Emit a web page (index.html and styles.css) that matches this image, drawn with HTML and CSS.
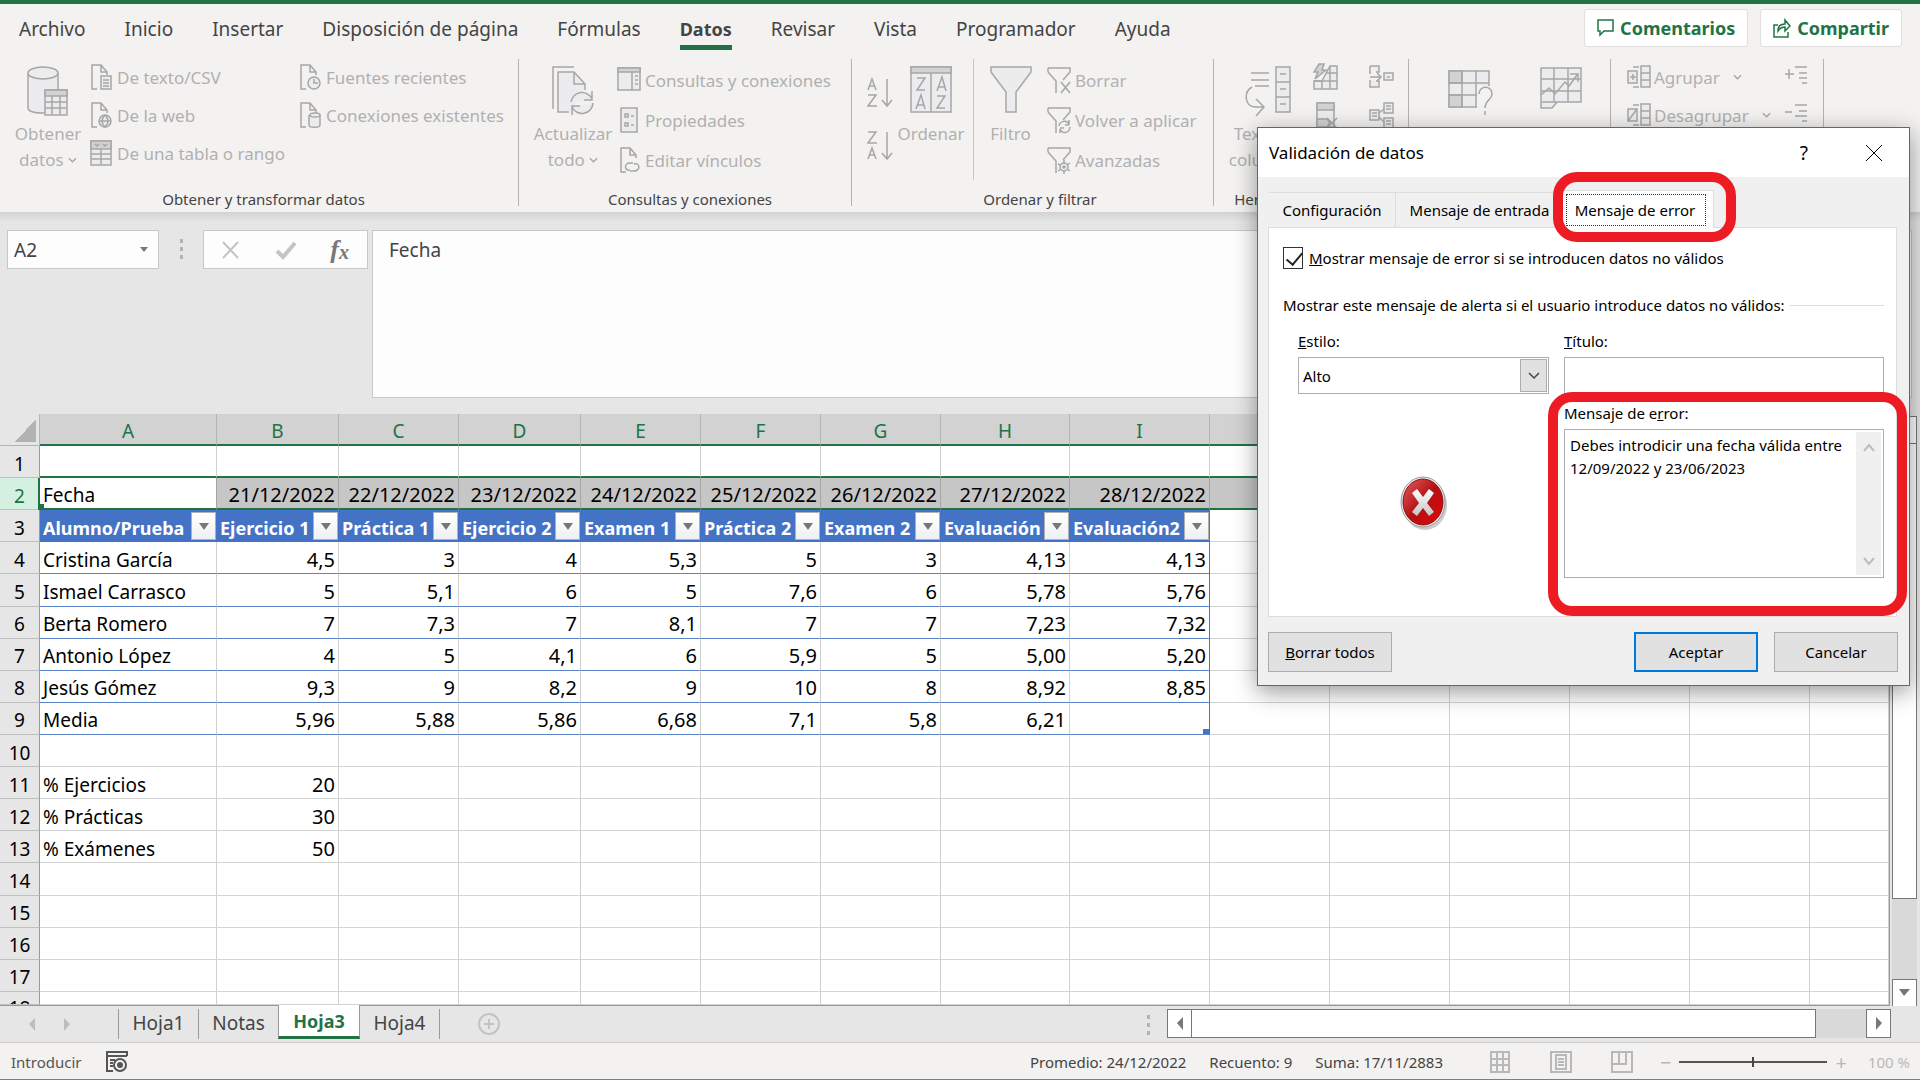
FILE: index.html
```html
<!doctype html>

<html lang="es">
    <head>
        <meta charset="utf-8">
        <meta name="viewport" content="width=device-width, initial-scale=1">

        <title>Validación de datos</title>
        <link rel="stylesheet" href="styles.css">
    </head>

    <body>
        <!-- shared icon shapes -->
        <svg class="defs" aria-hidden="true">
            <symbol id="page" viewBox="0 0 24 28">
                <path d="M7 26H2V2h9l6 7v3M11 2v7h6" />
            </symbol>
            <symbol id="chevron" viewBox="0 0 10 8">
                <path d="M1 2l4 4 4-4" />
            </symbol>
            <symbol id="funnel" viewBox="0 0 24 28">
                <path d="M1 2h22v4l-7 8M1 6V2M1 6l8 9v12" />
            </symbol>
        </svg>

        <nav class="menuBar">
            <a href="#">Archivo</a>
            <a href="#">Inicio</a>
            <a href="#">Insertar</a>
            <a href="#">Disposición de página</a>
            <a href="#">Fórmulas</a>
            <a href="#" class="current">Datos</a>
            <a href="#">Revisar</a>
            <a href="#">Vista</a>
            <a href="#">Programador</a>
            <a href="#">Ayuda</a>
            <div class="menuActions">
                <button class="action">
                    <svg width="17" height="20" viewBox="0 0 17 20"><path d="M1 2h15v11H7l-4 4v-4H1z" /></svg>
                    Comentarios
                </button>
                <button class="action">
                    <svg width="18" height="20" viewBox="0 0 18 20"><path d="M5 7H1v12h14v-5M5 13c0-5 3-7 7-7V2l5 6-5 5V9c-3 0-5 1-7 4z" /></svg>
                    Compartir
                </button>
            </div>
        </nav>

        <div class="ribbon">
            <section class="group groupGet">
                <div class="tools">
                    <button class="big bigGet">
                        <svg width="42" height="50" viewBox="0 0 42 50">
                            <path class="soft" d="M1 7v35c0 3 6 5 15 5h6V24h9V7" />
                            <ellipse class="soft" cx="16" cy="7" rx="15" ry="6" />
                            <path class="soft" d="M18 24h22v25H18z" />
                            <path class="shade" d="M18 24h22v6H18z" />
                            <path d="M18 36h22M18 42h22M25 30v19M33 30v19" />
                        </svg>
                        <span>Obtener</span>
                        <span>datos <svg width="9" height="8"><use href="#chevron" /></svg></span>
                    </button>
                    <div class="col colSources">
                        <button class="small"><svg width="24" height="28"><use href="#page" /><path class="soft" d="M11 13h10v13H11zM13 17h6M13 20h6M13 23h6" /></svg>De texto/CSV</button>
                        <button class="small"><svg width="24" height="28"><use href="#page" /><circle class="soft" cx="15" cy="20" r="6" /><path d="M9 20h12M15 14c-4 4-4 8 0 12 4-4 4-8 0-12" /></svg>De la web</button>
                        <button class="small"><svg width="24" height="28"><path class="soft" d="M1 2h20v24H1z" /><path class="shade" d="M1 2h20v8H1z" /><path d="M11 10v16M1 15h20M1 20h20M5 5l2 2 2-2M13 5l2 2 2-2" /></svg>De una tabla o rango</button>
                    </div>
                    <div class="col">
                        <button class="small"><svg width="24" height="28"><use href="#page" /><circle class="soft" cx="15" cy="20" r="6" /><path d="M15 16v4h4" /></svg>Fuentes recientes</button>
                        <button class="small"><svg width="24" height="28"><use href="#page" /><path class="soft" d="M10 14v10c0 3 11 3 11 0V14" /><ellipse class="soft" cx="16" cy="14" rx="5" ry="2" /></svg>Conexiones existentes</button>
                    </div>
                </div>
                <h2>Obtener y transformar datos</h2>
            </section>

            <section class="group groupQueries">
                <div class="tools">
                    <button class="big bigRefresh">
                        <svg width="42" height="50" viewBox="0 0 42 50">
                            <path d="M1 43V1h21" />
                            <path class="soft" d="M17 46H6V6h16l11 12v6" />
                            <path d="M22 6v12h11" />
                            <path class="soft" d="M19 36a11 11 0 0 1 21-3M40 25v9h-8M41 37a11 11 0 0 1-21 4M20 49v-9h8" />
                        </svg>
                        <span>Actualizar</span>
                        <span>todo <svg width="9" height="8"><use href="#chevron" /></svg></span>
                    </button>
                    <div class="col colWide">
                        <button class="small"><svg width="24" height="28"><path class="soft" d="M1 2h22v22H1z" /><path class="shade" d="M1 2h22v4H1z" /><path d="M15 6v18M18 10h3M18 14h3M18 18h3" /></svg>Consultas y conexiones</button>
                        <button class="small"><svg width="24" height="28"><path class="soft" d="M4 2h16v24H4z" /><path d="M8 8h3v3H8zM8 17h3v3H8zM14 10h3M14 19h3" /></svg>Propiedades</button>
                        <button class="small"><svg width="24" height="28"><use href="#page" x="2" /><path d="M13 24c-6 1-6-7 0-7h3M17 18c6-2 7 7 0 7h-4" /></svg>Editar vínculos</button>
                    </div>
                </div>
                <h2>Consultas y conexiones</h2>
            </section>

            <section class="group groupSort">
                <div class="tools">
                    <div class="sortButtons">
                        <button aria-label="Ordenar de A a Z">
                            <svg width="26" height="32" viewBox="0 0 26 32"><path d="M1 13l4-11 4 11M2 9h6M1 18h8L1 29h9M20 2v26M15 23l5 6 5-6" /></svg>
                        </button>
                        <button aria-label="Ordenar de Z a A">
                            <svg width="26" height="32" viewBox="0 0 26 32"><path d="M1 2h8L1 13h9M1 29l4-11 4 11M2 25h6M20 2v26M15 23l5 6 5-6" /></svg>
                        </button>
                    </div>
                    <button class="big bigSort">
                        <svg width="42" height="50" viewBox="0 0 42 50">
                            <path class="soft" d="M1 1h40v45H1z" />
                            <path class="shade" d="M1 1h40v6H1z" />
                            <path d="M21 7v39M7 12h8l-8 12h8M6 43l5-14 4 14M7 39h7M27 25l5-14 4 14M28 21h7M27 30h8l-8 12h8" />
                        </svg>
                        <span>Ordenar</span>
                    </button>
                    <button class="big bigFilter">
                        <svg width="42" height="50" viewBox="0 0 42 50"><path class="soft" d="M1 1h40v5L26 26v20H16V26L1 6z" /></svg>
                        <span>Filtro</span>
                    </button>
                    <div class="col colWide">
                        <button class="small"><svg width="24" height="28"><use href="#funnel" /><path d="M14 16l9 11M23 16l-9 11" /></svg>Borrar</button>
                        <button class="small"><svg width="24" height="28"><use href="#funnel" /><path d="M12 20c1-6 9-6 10-1v-5M22 19h-4M23 21c-1 7-8 7-10 2v4M13 22h4" /></svg>Volver a aplicar</button>
                        <button class="small"><svg width="24" height="28"><use href="#funnel" /><circle class="soft" cx="17" cy="21" r="4" /><circle cx="17" cy="21" r="1" /><path d="M17 14v3M17 25v3M11 18l3 1M20 23l3 2M11 25l3-2M20 19l3-2" /></svg>Avanzadas</button>
                    </div>
                </div>
                <h2>Ordenar y filtrar</h2>
            </section>

            <section class="group groupTools">
                <div class="tools">
                    <button class="big bigColumns">
                        <svg width="46" height="50" viewBox="0 0 46 50">
                            <path d="M6 7h18M6 14h18M10 20h14M7 21c-9 5-7 20 3 20h8M11 33l8 8-8 9" />
                            <path class="soft" d="M31 1h14v45H31z" />
                            <path d="M31 16h14M31 31h14M35 8h6M35 23h6M35 38h6" />
                        </svg>
                        <span>Texto en</span>
                        <span>columnas</span>
                    </button>
                    <div class="col colIcons">
                        <button class="small" aria-label="Relleno rápido"><svg width="26" height="28"><path class="soft" d="M1 18v8h23V3h-7L9 18z" /><path d="M17 3v23M9 18v8M1 18h23M14 10h10" /><path class="shade" d="M6 1h5L9 7h4L2 16l3-7H1z" /></svg></button>
                        <button class="small" aria-label="Quitar duplicados"><svg width="26" height="28"><path class="soft" d="M4 2h17v24H4z" /><path class="shade" d="M4 2h17v7H4zM4 18h10l3 4-3 4H4z" /><path d="M14 17l10 10M24 17L14 27" /></svg></button>
                    </div>
                    <div class="col">
                        <button class="small" aria-label="Consolidar"><svg width="26" height="28"><path class="soft" d="M1 3h9v6H7M1 3v8M1 17v7h9v-6H7M15 10h9v7h-9z" /><path d="M1 14h10M8 10l4 4-4 4M18 14h3" /></svg></button>
                        <button class="small" aria-label="Relaciones"><svg width="26" height="28"><path class="soft" d="M1 9h9v10H1zM15 2h9v10h-9zM15 17h9v10h-9z" /><path d="M10 12l5-4M10 16l5 5M3 12h5M3 15h5M17 5h5M17 8h5M17 20h5M17 23h5" /></svg></button>
                    </div>
                </div>
                <h2>Herramientas de datos</h2>
            </section>

            <section class="group groupForecast">
                <div class="tools">
                    <button class="big bigAnalysis">
                        <svg width="46" height="50" viewBox="0 0 46 50">
                            <path class="soft" d="M1 5h40v36H1z" />
                            <path class="shade" d="M1 5h13v12H1zM1 29h13v12H1z" />
                            <path d="M14 5v36M28 5v36M1 17h40M1 29h40" />
                            <path class="bg" d="M29 20h17v28H29z" />
                            <path d="M31 28c0-9 13-9 13 0 0 6-7 6-7 14M37 45v4" />
                        </svg>
                        <span>Análisis de</span>
                        <span>hipótesis</span>
                    </button>
                    <button class="big bigForecast">
                        <svg width="42" height="50" viewBox="0 0 42 50">
                            <path class="soft" d="M1 2h40v34H17l-5 6H1z" />
                            <path d="M14 2v34M28 2v34M1 13h40M1 25h40M1 36h16M1 29l8-7 6 6 10-12 4 4 8-11M30 8h8v8" />
                        </svg>
                        <span>Previsión</span>
                    </button>
                </div>
                <h2>Previsión</h2>
            </section>

            <section class="group groupOutline">
                <div class="tools">
                    <div class="col colOutline">
                        <button class="small"><svg width="24" height="28"><path class="soft" d="M14 3h9v21h-9zM1 8h9v12H1z" /><path d="M14 10h9M14 17h9M6 11v6M3 14h6M6 4h6M6 24h6" /></svg>Agrupar <svg class="arrow" width="9" height="8"><use href="#chevron" /></svg></button>
                        <button class="small"><svg width="24" height="28"><path class="soft" d="M14 3h9v21h-9zM1 8h9v12H1z" /><path d="M14 10h9M14 17h9M1 20L10 8M6 4h6M6 24h6" /></svg>Desagrupar <svg class="arrow" width="9" height="8"><use href="#chevron" /></svg></button>
                    </div>
                    <div class="col">
                        <button class="small" aria-label="Mostrar detalle"><svg width="24" height="28"><path d="M0 11h9M4 6v10M10 4h12M14 10h8M14 15h8M17 20h5" /></svg></button>
                        <button class="small" aria-label="Ocultar detalle"><svg width="24" height="28"><path d="M0 11h7M10 4h12M14 10h8M10 15h12M17 20h5" /></svg></button>
                    </div>
                </div>
                <h2>Esquema</h2>
            </section>
        </div>

        <div class="formulaBar">
            <div class="nameBox">
                <input type="text" value="A2" aria-label="Cuadro de nombres">
                <svg width="8" height="6" viewBox="0 0 8 6"><path d="M0 0h8L4 5z" /></svg>
            </div>
            <div class="dots"><i></i><i></i><i></i></div>
            <div class="formulaButtons">
                <button aria-label="Cancelar"><svg width="20" height="20" viewBox="0 0 20 20"><path d="M2 2l15 16M17 2L2 18" /></svg></button>
                <button aria-label="Introducir"><svg width="22" height="20" viewBox="0 0 22 20"><path class="heavy" d="M2 11l6 6L20 3" /></svg></button>
                <button class="fx" aria-label="Insertar función">f<small>x</small></button>
            </div>
            <textarea class="formula" aria-label="Barra de fórmulas">Fecha</textarea>
        </div>

        <div class="sheet">
            <div class="gridArea">
                <table class="grid">
                    <colgroup id="cols"></colgroup>
                    <thead><tr id="letters"></tr></thead>
                    <tbody id="rows"></tbody>
                </table>
            </div>
            <div class="vScroll">
                <button aria-label="Subir"><svg width="11" height="8" viewBox="0 0 11 8"><path d="M0 7h11L5 0z" /></svg></button>
                <div class="vThumb"></div>
                <button class="last" aria-label="Bajar"><svg width="11" height="8" viewBox="0 0 11 8"><path d="M0 0h11L5 7z" /></svg></button>
            </div>
        </div>

        <div class="tabBar">
            <div class="tabArrows">
                <svg width="6" height="13" viewBox="0 0 6 13"><path d="M6 0v13L0 6z" /></svg>
                <svg width="6" height="13" viewBox="0 0 6 13"><path d="M0 0v13l6-7z" /></svg>
            </div>
            <button class="sheetTab">Hoja1</button>
            <button class="sheetTab">Notas</button>
            <button class="sheetTab active">Hoja3</button>
            <button class="sheetTab">Hoja4</button>
            <button class="addSheet" aria-label="Hoja nueva">
                <svg width="24" height="26" viewBox="0 0 24 26"><circle cx="12" cy="13" r="10" /><path d="M7 13h10M12 8v10" /></svg>
            </button>
            <div class="dots tabDots"><i></i><i></i><i></i></div>
            <div class="hScroll">
                <button aria-label="Izquierda"><svg width="6" height="13" viewBox="0 0 6 13"><path d="M6 0v13L0 6z" /></svg></button>
                <div class="hThumb"></div>
                <button class="last" aria-label="Derecha"><svg width="6" height="13" viewBox="0 0 6 13"><path d="M0 0v13l6-7z" /></svg></button>
            </div>
        </div>

        <footer class="statusBar">
            <span class="mode">Introducir</span>
            <svg class="macro" width="22" height="24" viewBox="0 0 22 24"><path d="M7 21H1V2h20v4M1 6h20M4 10h5M4 13h3M4 16h3" /><circle cx="14" cy="15" r="6" /><circle class="dot" cx="14" cy="15" r="2" /></svg>
            <span class="stats"><span>Promedio: 24/12/2022</span><span>Recuento: 9</span><span>Suma: 17/11/2883</span></span>
            <div class="views">
                <svg width="22" height="24" viewBox="0 0 22 24"><path d="M2 2h18v20H2zM8 2v20M14 2v20M2 9h18M2 15h18" /></svg>
                <svg width="22" height="24" viewBox="0 0 22 24"><path d="M1 2h20v20H1zM6 5h10v14H6zM8 9h6M8 12h6M8 15h6" /></svg>
                <svg width="22" height="24" viewBox="0 0 22 24"><path d="M1 2h20v20H1zM8 2v12M1 14h14V2" /></svg>
            </div>
            <div class="zoomBox">
                <span>−</span>
                <input type="range" min="10" max="190" value="100" aria-label="Zoom">
                <span>+</span>
            </div>
            <span class="zoomValue">100 %</span>
        </footer>

        <div class="dialog" role="dialog" aria-labelledby="dialogTitle">
            <div class="titleBar">
                <h1 id="dialogTitle">Validación de datos</h1>
                <button class="help" aria-label="Ayuda">?</button>
                <button aria-label="Cerrar"><svg width="18" height="18" viewBox="0 0 18 18"><path d="M1 1l16 16M17 1L1 17" /></svg></button>
            </div>
            <div class="dialogTabs">
                <button>Configuración</button>
                <button class="wide">Mensaje de entrada</button>
                <button class="selected">Mensaje de error</button>
            </div>
            <div class="panel">
                <div class="checkRow">
                    <input type="checkbox" id="showError" checked>
                    <label for="showError"><u>M</u>ostrar mensaje de error si se introducen datos no válidos</label>
                </div>
                <fieldset>
                    <legend>Mostrar este mensaje de alerta si el usuario introduce datos no válidos:</legend>
                    <div class="fields">
                        <div class="field">
                            <label for="style"><u>E</u>stilo:</label>
                            <div class="selectBox">
                                <select id="style"><option>Alto</option><option>Advertencia</option><option>Información</option></select>
                                <span class="selectArrow"><svg width="12" height="8" viewBox="0 0 12 8"><path d="M1 1l5 5 5-5" /></svg></span>
                            </div>
                        </div>
                        <div class="field">
                            <label for="title"><u>T</u>ítulo:</label>
                            <input type="text" id="title">
                        </div>
                        <div class="stopIcon">
                            <svg width="50" height="56" viewBox="0 0 50 56">
                                <defs>
                                    <linearGradient id="red" x1="0" y1="0" x2="1" y2="1">
                                        <stop offset="0" stop-color="#e06060" />
                                        <stop offset=".5" stop-color="#b50f12" />
                                        <stop offset="1" stop-color="#e00808" />
                                    </linearGradient>
                                    <linearGradient id="silver" x1="0" y1="0" x2="0" y2="1">
                                        <stop offset="0" stop-color="#fff" />
                                        <stop offset="1" stop-color="#c4c4c4" />
                                    </linearGradient>
                                </defs>
                                <ellipse cx="26" cy="29" rx="22" ry="25" fill="#aaa" opacity=".6" />
                                <ellipse cx="24" cy="26" rx="22" ry="25" fill="#eee" stroke="#999" />
                                <ellipse cx="24" cy="26" rx="20" ry="23" fill="url(#red)" stroke="#8c1010" />
                                <path d="M13 17l5-4 6 8 6-8 5 4-7 10 7 9-5 4-6-8-6 8-5-4 7-9z" fill="url(#silver)" />
                            </svg>
                        </div>
                        <div class="field">
                            <label for="message">Mensaje de e<u>r</u>ror:</label>
                            <div class="messageBox">
                                <textarea id="message">Debes introdicir una fecha válida entre 12/09/2022 y 23/06/2023</textarea>
                                <div class="messageScroll">
                                    <svg width="12" height="12" viewBox="0 0 12 12"><path d="M1 9l5-6 5 6" /></svg>
                                    <svg width="12" height="12" viewBox="0 0 12 12"><path d="M1 3l5 6 5-6" /></svg>
                                </div>
                            </div>
                        </div>
                    </div>
                </fieldset>
            </div>
            <div class="dialogButtons">
                <button><u>B</u>orrar todos</button>
                <button class="ok">Aceptar</button>
                <button>Cancelar</button>
            </div>
            <div class="mark markTab"></div>
            <div class="mark markMessage"></div>
        </div>

        <script>
            const letters = ["A", "B", "C", "D", "E", "F", "G", "H", "I", "", "", "", "", "", ""]
            const widths = [40, 177, 122, 120, 122, 120, 120, 120, 129, 140, 120, 120, 120, 120, 120]
            const data = {
                2: ["Fecha", "21/12/2022", "22/12/2022", "23/12/2022", "24/12/2022", "25/12/2022", "26/12/2022", "27/12/2022", "28/12/2022"],
                3: ["Alumno/Prueba", "Ejercicio 1", "Práctica 1", "Ejercicio 2", "Examen 1", "Práctica 2", "Examen 2", "Evaluación", "Evaluación2"],
                4: ["Cristina García", "4,5", "3", "4", "5,3", "5", "3", "4,13", "4,13"],
                5: ["Ismael Carrasco", "5", "5,1", "6", "5", "7,6", "6", "5,78", "5,76"],
                6: ["Berta Romero", "7", "7,3", "7", "8,1", "7", "7", "7,23", "7,32"],
                7: ["Antonio López", "4", "5", "4,1", "6", "5,9", "5", "5,00", "5,20"],
                8: ["Jesús Gómez", "9,3", "9", "8,2", "9", "10", "8", "8,92", "8,85"],
                9: ["Media", "5,96", "5,88", "5,86", "6,68", "7,1", "5,8", "6,21", ""],
                11: ["% Ejercicios", "20"],
                12: ["% Prácticas", "30"],
                13: ["% Exámenes", "50"]
            }
            const filterButton = '<button class="filter" aria-label="Filtrar"><svg width="10" height="7" viewBox="0 0 10 7"><path d="M0 0h10L5 7z" /></svg></button>'

            // the last column has no width, it takes what is left
            document.getElementById("cols").innerHTML = widths.map(w => `<col style="width: ${w}px">`).join("") + "<col>"
            document.getElementById("letters").innerHTML = '<th class="corner"></th>' + letters.map(l => `<th>${l}</th>`).join("")

            const cell = (row, col) => {
                const text = (data[row] || [])[col] || ""
                const inTable = row >= 3 && row <= 9 && col < 9
                let classes = col == 0 ? "text" : "number"
                if (inTable) classes += row == 3 ? " head" : " body"
                if (inTable && col == 8) classes += " edge"
                if (inTable && col == 8 && row == 9) classes += " corner9"
                return `<td class="${classes}">${text}${inTable && row == 3 ? filterButton : ""}</td>`
            }

            let html = ""
            for (let row = 1; row <= 18; row++) {
                html += `<tr class="row${row}"><th><div>${row}</div></th>${letters.map((l, col) => cell(row, col)).join("")}</tr>`
            }
            document.getElementById("rows").innerHTML = html
        </script>
    </body>
</html>
```
FILE: styles.css
```css
* {
    box-sizing: border-box;
}

body {
    margin: 0;
    height: 100vh;
    display: flex;
    flex-direction: column;
    overflow: hidden;
    position: relative;
    background: #e6e6e6;
    border-top: 4px solid #217346;
    border-bottom: 1px solid #7a8085;
    font-family: "Noto Sans", "Open Sans", sans-serif;
    font-size: 17px;
    color: #444;
}

button, input, select, textarea {
    font: inherit;
    color: inherit;
    margin: 0;
    padding: 0;
    border: 0;
    border-radius: 0;
    background: none;
    outline: none;
}

svg {
    fill: none;
    stroke: currentColor;
    stroke-width: 2;
    flex: none;
}

.defs {
    position: absolute;
    width: 0;
    height: 0;
}

/* menu */

.menuBar {
    display: flex;
    flex: none;
    height: 50px;
    background: #f3f2f1;
    font-size: 19px;
}

.menuBar a {
    margin: 0 20px 0 19px;
    line-height: 38px;
    height: 46px;
    padding-top: 6px;
    color: #444;
    text-decoration: none;
    white-space: nowrap;
}

.menuBar a.current {
    font-weight: bold;
    font-size: 18px;
    border-bottom: 5px solid #217346;
}

.menuActions {
    display: flex;
    gap: 12px;
    margin-left: auto;
    padding: 5px 18px 5px 0;
}

.action {
    display: flex;
    align-items: center;
    gap: 6px;
    height: 38px;
    padding: 0 12px;
    background: #fff;
    border: 1px solid #e1dfdd;
    border-radius: 3px;
    color: #217346;
    font-weight: bold;
    font-size: 18px;
}

.action svg {
    stroke-width: 1.5;
}

/* ribbon */

.ribbon {
    display: flex;
    flex: none;
    height: 158px;
    padding: 5px 0 6px;
    background: #f3f2f1;
    color: #b1b0af;
}

.ribbon svg {
    stroke: #a6a6a6;
    stroke-width: 1.5;
}

.ribbon .soft { fill: #ececee; }
.ribbon .shade { fill: #d2d2d2; }
.ribbon .bg { fill: #f3f2f1; stroke: none; }

.group {
    display: flex;
    flex: none;
    flex-direction: column;
    justify-content: space-between;
    border-right: 1px solid #b5b3b1;
}

.groupGet { width: 519px; padding-left: 9px; }
.groupQueries { width: 333px; padding-left: 10px; }
.groupSort { width: 362px; padding-left: 15px; }
.groupTools { width: 195px; padding-left: 8px; }
.groupForecast { width: 202px; padding-left: 12px; }
.groupOutline { width: 213px; padding-left: 16px; }

.tools {
    display: flex;
}

.group h2 {
    margin: 0;
    text-align: center;
    font-size: 15px;
    font-weight: normal;
    line-height: 14px;
    color: #444;
}

.big {
    display: flex;
    flex: none;
    flex-direction: column;
    align-items: center;
    padding-top: 7px;
    line-height: 26px;
    white-space: nowrap;
}

.big > svg {
    margin-bottom: 5px;
}

.big span svg {
    vertical-align: 2px;
}

.bigGet { width: 78px; }
.bigRefresh { width: 88px; }
.bigSort { width: 78px; }
.bigFilter { width: 74px; margin-left: 3px; border-left: 1px solid #c8c6c4; }
.bigColumns { width: 91px; }
.bigAnalysis { width: 100px; }
.bigForecast { width: 80px; }

.col {
    display: flex;
    flex: none;
    flex-direction: column;
    margin-top: -1px;
}

.colSources { width: 212px; padding-left: 3px; }
.colIcons { width: 56px; }
.colOutline { width: 158px; }

.small {
    display: flex;
    align-items: center;
    gap: 3px;
    height: 38px;
    white-space: nowrap;
}

.colWide {
    padding-top: 2px;
}

.colWide .small {
    height: 40px;
    gap: 4px;
}

.small .arrow {
    margin-left: 10px;
}

.sortButtons {
    display: flex;
    flex-direction: column;
    gap: 21px;
    width: 25px;
    padding-top: 18px;
}

.sortButtons button {
    height: 32px;
}

/* formula bar */

.formulaBar {
    display: flex;
    flex: none;
    align-items: flex-start;
    height: 202px;
    padding: 18px 8px 16px 7px;
    background: linear-gradient(#d2d2d2, #e6e6e6 10px);
    font-size: 19px;
}

.nameBox {
    display: flex;
    align-items: center;
    width: 152px;
    height: 39px;
    padding: 0 10px 0 6px;
    background: #fdfdfd;
    border: 1px solid #c8c8c8;
}

.nameBox input {
    width: 100%;
}

.nameBox path, .tabArrows path, .vScroll path, .hScroll path, .filter path {
    fill: #777;
    stroke: none;
}

.dots {
    display: flex;
    flex-direction: column;
    gap: 4px;
    width: 44px;
    padding-top: 9px;
    align-items: center;
}

.dots i {
    width: 3px;
    height: 4px;
    background: #b3b3b3;
}

.formulaButtons {
    display: flex;
    align-items: center;
    justify-content: space-between;
    width: 165px;
    height: 39px;
    padding: 0 18px 0 17px;
    background: #fdfdfd;
    border: 1px solid #c8c8c8;
    color: #c4c4c4;
}

.formulaButtons button {
    height: 36px;
    display: flex;
    align-items: center;
}

.formulaButtons .heavy {
    stroke-width: 4;
}

.formulaButtons .fx {
    font: italic bold 26px "Liberation Serif", serif;
    color: #777;
}

.fx small {
    font-size: 20px;
    padding-top: 5px;
}

.formula {
    flex: 1;
    height: 168px;
    margin-left: 4px;
    padding: 5px 16px;
    background: #fdfdfd;
    border: 1px solid #c8c8c8;
    line-height: 28px;
    resize: none;
}

/* sheet */

.sheet {
    display: flex;
    flex: 1;
    min-height: 0;
    padding-right: 3px;
}

.gridArea {
    flex: 1;
    background: #fff;
    border-right: 1px solid #999;
    border-bottom: 1px solid #999;
    overflow: hidden;
}

.grid {
    width: 100%;
    height: 100%;
    table-layout: fixed;
    border-collapse: separate;
    border-spacing: 0;
    font-size: 20px;
    line-height: 26px;
    color: #000;
}

.grid tr {
    height: 32px;
}

.grid th, .grid td {
    padding: 4px 0 0;
    border-right: 1px solid #d0d0d0;
    border-bottom: 1px solid #d4d4d4;
    font-weight: normal;
    white-space: nowrap;
}

.grid thead th {
    background: #d2d2d2;
    border-right-color: #b4b4b4;
    border-bottom: 2px solid #217346;
    color: #217346;
    font-size: 19px;
}

.grid thead .corner {
    background: linear-gradient(to bottom right, transparent 50%, #b2b2b2 50%) 15px 5px / 21px 23px no-repeat #e6e6e6;
    border-right-color: #b4b4b4;
    border-bottom: 1px solid #b4b4b4;
}

.grid tbody th {
    background: #e6e6e6;
    border-right-color: #999;
    border-bottom-color: #c0c0c0;
    font-size: 19px;
}

.grid td.text {
    padding-left: 3px;
    font-size: 19px;
}

.grid td.number {
    padding-right: 3px;
    text-align: right;
}

.grid .row1 td {
    border-bottom: 2px solid #217346;
}

.grid .row2 td {
    border-bottom: 2px solid #217346;
    border-right-color: #a4a4a4;
    background: #c6c6c6;
}

.grid .row2 td.text {
    position: relative;
    background: #fff;
}

/* left edge and fill handle of the selection */
.grid .row2 td.text::before, .grid .row2 td.text::after {
    content: "";
    position: absolute;
    left: -2px;
    top: 0;
    width: 2px;
    height: 100%;
    background: #217346;
}

.grid .row2 td.text::after {
    top: auto;
    bottom: -2px;
    width: 6px;
    height: 6px;
}

.grid .row2 th {
    background: #d3f0e0;
    color: #217346;
}

.grid td.head {
    position: relative;
    padding-left: 3px;
    background: #4472c4;
    border-color: #4472c4;
    color: #fff;
    font-size: 18px;
    font-weight: bold;
    text-align: left;
}

.grid td.body {
    border-bottom-color: #5b83cb;
}

.grid td.edge {
    border-right-color: #4472c4;
}

.grid td.corner9 {
    background: linear-gradient(#4472c4, #4472c4) right bottom / 6px 5px no-repeat;
}

.filter {
    position: absolute;
    right: 0;
    top: 2px;
    width: 25px;
    height: 28px;
    display: flex;
    align-items: center;
    justify-content: center;
    background: linear-gradient(#fff, #eef0f5);
    border: 1px solid #b0b0b0;
}

.grid .row18, .grid .row18 div {
    height: 9px;
    overflow: hidden;
}

.grid .row18 th {
    padding-top: 3px;
}

.vScroll {
    display: flex;
    flex-direction: column;
    width: 27px;
    margin-bottom: -1px;
    padding: 2px 0 0 2px;
}

.vScroll button, .hScroll button, .vThumb, .hThumb {
    display: flex;
    align-items: center;
    justify-content: center;
    background: #fff;
    border: 1px solid #777;
}

.vScroll button {
    height: 28px;
    flex: none;
}

.vThumb {
    height: 455px;
    border-top: 0;
}

.vScroll, .hScroll {
    background: #d9d9d9;
    background-clip: content-box;
}

.vScroll .last {
    margin-top: auto;
}

/* sheet tabs */

.tabBar {
    display: flex;
    flex: none;
    height: 37px;
    border-bottom: 1px solid #cacaca;
    font-size: 19px;
    background: #e6e6e6;
}

.tabArrows {
    display: flex;
    align-items: center;
    gap: 29px;
    width: 119px;
    padding-left: 29px;
    border-right: 1px solid #999;
    margin: 3px 0;
}

.tabArrows path {
    fill: #bdbdbd;
}

.sheetTab {
    width: 80px;
    margin: 3px 0;
    padding-bottom: 3px;
    border-right: 1px solid #999;
    line-height: 26px;
}

.sheetTab.active {
    width: 82px;
    margin: -1px 0 3px -1px;
    padding: 1px 0 0;
    background: #fff;
    border: 1px solid #999;
    border-top: 0;
    border-bottom: 3px solid #217346;
    color: #217346;
    font-weight: bold;
    font-size: 18px;
}

.addSheet {
    display: flex;
    align-items: center;
    margin-left: 37px;
    color: #c3c3c3;
}

.tabDots {
    margin-left: auto;
    width: 38px;
}

.hScroll {
    display: flex;
    width: 724px;
    height: 29px;
    margin: 3px 29px 0 0;
}

.hScroll button {
    width: 25px;
    flex: none;
}

.hThumb {
    width: 624px;
    border-left: 0;
}

.hScroll .last {
    margin-left: auto;
}

/* status bar */

.statusBar {
    display: flex;
    flex: none;
    align-items: center;
    height: 36px;
    padding: 2px 10px 0 11px;
    background: #f3f2f1;
    font-size: 15px;
    color: #555;
    white-space: nowrap;
}

.macro {
    margin-left: 24px;
}

.macro .dot {
    fill: currentColor;
}

.stats {
    display: flex;
    gap: 23px;
    margin-left: auto;
    color: #444;
}

.views {
    display: flex;
    gap: 39px;
    margin: 0 27px 0 46px;
    color: #b8b8b8;
}

.zoomBox {
    display: flex;
    align-items: center;
    gap: 8px;
    color: #b8b8b8;
    font-size: 20px;
}

.zoomBox input {
    width: 148px;
    height: 16px;
    appearance: none;
    background: linear-gradient(#555, #555) center / 100% 2px no-repeat;
}

.zoomBox input::-webkit-slider-thumb {
    appearance: none;
    width: 2px;
    height: 10px;
    background: #444;
}

.zoomValue {
    margin-left: 21px;
    color: #b8b8b8;
}

/* dialog */

.dialog {
    position: absolute;
    top: 123px;
    right: 10px;
    width: 653px;
    background: #f0f0f0;
    border: 1px solid #666;
    box-shadow: 0 6px 22px rgba(0, 0, 0, .4);
    font-size: 15px;
    line-height: 20px;
    color: #000;
}

.titleBar {
    display: flex;
    align-items: center;
    height: 49px;
    padding: 0 26px 0 11px;
    background: #fff;
}

.titleBar h1 {
    flex: 1;
    margin: 0;
    font-size: 17px;
    font-weight: normal;
}

.titleBar svg {
    display: block;
    stroke-width: 1;
}

.titleBar .help {
    margin-right: 57px;
    font-size: 19px;
}

.dialogTabs {
    display: flex;
    align-items: flex-end;
    height: 51px;
    padding: 0 11px;
    margin-bottom: -1px;
}

.dialogTabs button {
    width: 127px;
    height: 36px;
    border: 1px solid #dcdcdc;
    border-left: 0;
}

.dialogTabs .wide {
    width: 167px;
    border-right: 0;
}

.dialogTabs .selected {
    position: relative;
    width: 151px;
    height: 38px;
    padding-right: 6px;
    background: #fff;
    border-bottom: 0;
}

/* focus rectangle */
.dialogTabs .selected::after {
    content: "";
    position: absolute;
    inset: 3px 7px 2px 3px;
    border: 1px dotted #333;
}

.panel {
    margin: 0 12px 0 10px;
    padding: 19px 12px 38px 14px;
    background: #fff;
    border: 1px solid #dcdcdc;
}

.checkRow {
    display: flex;
    align-items: center;
    gap: 6px;
    height: 22px;
}

.checkRow input {
    appearance: none;
    width: 20px;
    height: 22px;
    border: 1px solid #333;
    position: relative;
}

.checkRow input:checked::after {
    content: "";
    position: absolute;
    left: 6px;
    top: 1px;
    width: 7px;
    height: 14px;
    border: solid #222;
    border-width: 0 2px 2px 0;
    transform: rotate(40deg);
}

fieldset {
    margin: 26px 0 0;
    padding: 0;
    border: 0;
    min-width: 0;
}

legend {
    display: flex;
    align-items: center;
    gap: 5px;
    width: 100%;
    padding: 0;
    white-space: nowrap;
}

legend::after {
    content: "";
    flex: 1;
    border-top: 1px solid #dcdcdc;
}

.fields {
    display: grid;
    grid-template-columns: 251px 1fr;
    gap: 9px 15px;
    padding: 16px 0 0 15px;
}

.field {
    display: flex;
    flex-direction: column;
    gap: 6px;
}

.field > input, .selectBox, .messageBox {
    height: 37px;
    border: 1px solid #adadb3;
    background: #fff;
}

.selectBox {
    position: relative;
}

.selectBox select {
    appearance: none;
    width: 100%;
    height: 100%;
    padding-left: 4px;
}

.selectArrow {
    position: absolute;
    top: 1px;
    right: 1px;
    bottom: 1px;
    width: 27px;
    display: flex;
    align-items: center;
    justify-content: center;
    background: #e1e1e1;
    border: 1px solid #adadad;
    pointer-events: none;
}

.selectArrow svg {
    stroke-width: 1.5;
    color: #444;
}

.field > input {
    padding: 0 5px;
}

.stopIcon {
    display: flex;
    align-items: center;
    justify-content: center;
    padding-top: 27px;
}

.stopIcon svg {
    stroke: none;
    stroke-width: 1;
}

.messageBox {
    display: flex;
    height: 149px;
    padding: 2px;
}

.messageBox textarea {
    flex: 1;
    min-width: 0;
    padding: 2px 3px;
    line-height: 23px;
    resize: none;
    overflow: hidden;
}

.messageScroll {
    display: flex;
    flex-direction: column;
    align-items: center;
    justify-content: space-between;
    width: 25px;
    padding: 10px 0 8px;
    background: #f0f0f0;
    color: #bdbdbd;
}

.dialogButtons {
    display: flex;
    gap: 16px;
    padding: 15px 11px 13px 10px;
}

.dialogButtons button {
    width: 124px;
    height: 40px;
    background: #e1e1e1;
    border: 1px solid #adadad;
}

.dialogButtons button.ok {
    margin-left: auto;
    border: 2px solid #0078d7;
}

/* red highlights over the dialog */
.mark {
    position: absolute;
    border: 10px solid #ed1c24;
    border-radius: 24px;
    pointer-events: none;
}

.markTab {
    top: 44px;
    left: 295px;
    width: 183px;
    height: 70px;
}

.markMessage {
    top: 264px;
    left: 290px;
    width: 359px;
    height: 224px;
}
```
